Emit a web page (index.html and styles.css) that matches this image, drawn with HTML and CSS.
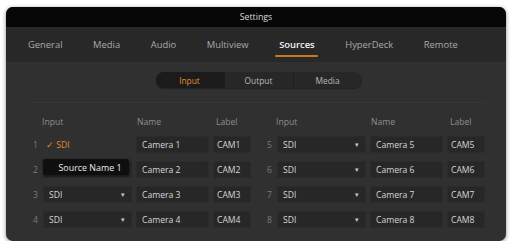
FILE: index.html
```html
<!DOCTYPE html>
<html>
<head>
<meta charset="utf-8">
<link rel="stylesheet" href="styles.css">
</head>
<body>
<div class="window">
  <div class="titlebar">Settings</div>
  <div class="tabs">
    <span class="tab">General</span>
    <span class="tab">Media</span>
    <span class="tab">Audio</span>
    <span class="tab">Multiview</span>
    <span class="tab active">Sources</span>
    <span class="tab">HyperDeck</span>
    <span class="tab">Remote</span>
  </div>
  <div class="content">
    <div class="segmented">
      <span class="seg on">Input</span>
      <span class="seg">Output</span>
      <span class="seg">Media</span>
    </div>
    <div class="divider"></div>
    <div class="groups">
      <div class="group">
        <span></span><span class="head h-input">Input</span><span class="head">Name</span><span class="head h-label">Label</span>

        <span class="num">1</span>
        <div class="select open">
          <span class="check">✓ SDI</span>
          <div class="menu">Source Name 1</div>
        </div>
        <span class="box">Camera 1</span><span class="box lab">CAM1</span>

        <span class="num">2</span>
        <span class="select"></span>
        <span class="box">Camera 2</span><span class="box lab">CAM2</span>

        <span class="num">3</span>
        <span class="select"><span>SDI</span><span class="arrow">▾</span></span>
        <span class="box">Camera 3</span><span class="box lab">CAM3</span>

        <span class="num">4</span>
        <span class="select"><span>SDI</span><span class="arrow">▾</span></span>
        <span class="box">Camera 4</span><span class="box lab">CAM4</span>
      </div>
      <div class="group">
        <span></span><span class="head h-input">Input</span><span class="head">Name</span><span class="head h-label">Label</span>

        <span class="num">5</span>
        <span class="select"><span>SDI</span><span class="arrow">▾</span></span>
        <span class="box">Camera 5</span><span class="box lab">CAM5</span>

        <span class="num">6</span>
        <span class="select"><span>SDI</span><span class="arrow">▾</span></span>
        <span class="box">Camera 6</span><span class="box lab">CAM6</span>

        <span class="num">7</span>
        <span class="select"><span>SDI</span><span class="arrow">▾</span></span>
        <span class="box">Camera 7</span><span class="box lab">CAM7</span>

        <span class="num">8</span>
        <span class="select"><span>SDI</span><span class="arrow">▾</span></span>
        <span class="box">Camera 8</span><span class="box lab">CAM8</span>
      </div>
    </div>
  </div>
</div>
</body>
</html>
```
FILE: styles.css
```css
html, body {
  margin: 0;
  padding: 0;
  background: #ffffff;
}
body {
  padding: 7px 0 0 6px;
  font-family: "Open Sans", "Noto Sans", sans-serif;
  font-size: 8.6px;
}
.window {
  width: 500px;
  height: 234px;
  border-radius: 7px;
  overflow: hidden;
  background: #303030;
  box-shadow: 0 1px 4px rgba(0,0,0,0.45);
  display: flex;
  flex-direction: column;
}
.titlebar {
  height: 20px;
  background: #070707;
  color: #dadada;
  font-size: 8.8px;
  display: flex;
  align-items: center;
  justify-content: center;
}
.tabs {
  height: 35px;
  background: #282828;
  display: flex;
  align-items: center;
  padding-left: 22px;
  font-size: 9.4px;
}
.tab {
  color: #a8a8a8;
  position: relative;
  margin-right: 30.6px;
}
.tab.active {
  color: #f2f2f2;
  font-weight: 600;
}
.tab.active::after {
  content: "";
  position: absolute;
  left: -4px;
  right: -3px;
  bottom: -6px;
  height: 2px;
  border-radius: 1px;
  background: #c7781f;
}
.content {
  flex: 1;
  padding-top: 10px;
  display: flex;
  flex-direction: column;
}
.segmented {
  align-self: center;
  margin-left: 5px;
  display: flex;
  height: 16px;
  border-radius: 8px;
  overflow: hidden;
  background: #272727;
  box-shadow: 0 1px 1px rgba(0,0,0,0.3);
  font-size: 8.4px;
}
.seg {
  width: 68px;
  display: flex;
  align-items: center;
  justify-content: center;
  color: #b8b8b8;
  border-left: 1px solid #1e1e1e;
}
.seg:first-child { border-left: none; }
.seg.on {
  background: #1b1b1b;
  color: #e38a2a;
}
.divider {
  margin: 14px 20px 0 26px;
  height: 1px;
  background: #363636;
}
.groups {
  display: flex;
  gap: 14px;
  padding-left: 25px;
  margin-top: 8px;
}
.group {
  display: grid;
  grid-template-columns: 8px 89px 73px 38px;
  grid-template-rows: 17px repeat(4, 17px);
  column-gap: 4px;
  row-gap: 8px;
  align-items: center;
}
.head {
  color: #8e8e8e;
  padding-left: 1px;
  align-self: end;
  line-height: 10px;
  margin-bottom: 1px;
}
.h-input { margin-left: -2px; }
.h-label { padding-left: 3px; }
.num {
  color: #7a7a7a;
  text-align: left;
  padding-left: 2px;
}
.box, .select {
  height: 17px;
  box-sizing: border-box;
  background: #272727;
  border-radius: 3px;
  color: #d6d6d6;
  display: flex;
  align-items: center;
  padding-left: 6px;
  box-shadow: inset 0 0 0 1px #2b2b2b;
}
.lab {
  padding-left: 4px;
}
.select {
  justify-content: space-between;
  padding-right: 7px;
}
.arrow {
  font-size: 7px;
  color: #c8c8c8;
}
.select.open {
  position: relative;
  background: transparent;
  box-shadow: none;
  padding-left: 3px;
}
.check {
  color: #e38a2a;
}
.menu {
  position: absolute;
  left: 0;
  top: 23px;
  width: 86px;
  height: 16px;
  box-sizing: border-box;
  padding-left: 8px;
  background: #0f0f0f;
  color: #ececec;
  font-size: 8.9px;
  border-radius: 2px;
  display: flex;
  align-items: center;
  justify-content: center;
  box-shadow: 0 1px 3px rgba(0,0,0,0.5);
}
```
